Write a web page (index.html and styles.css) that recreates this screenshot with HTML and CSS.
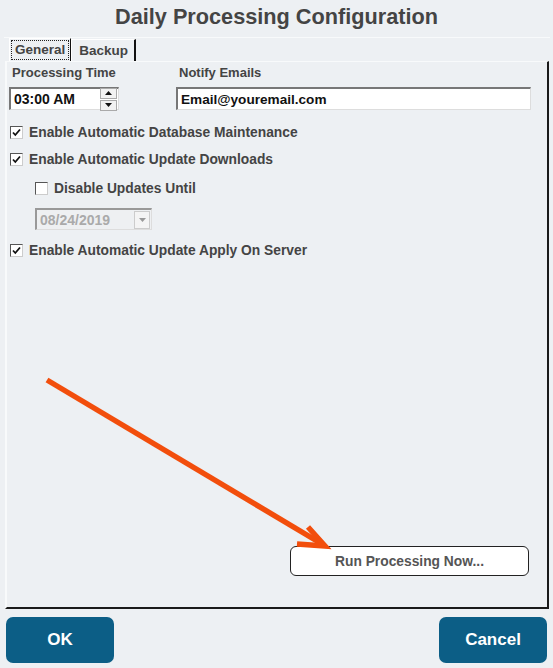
FILE: index.html
```html
<!DOCTYPE html>
<html lang="en">

<head>
    <meta charset="UTF-8">
    <title>Daily Processing Configuration</title>
    <meta name="viewport" content="width=device-width, initial-scale=1.0">
    <link rel="stylesheet" href="styles.css">
</head>

<body>
    <div class="dialog">
        <h1 class="title">Daily Processing Configuration</h1>

        <div class="tab-strip">
            <div class="tab tab-active"><span class="focus">General</span></div>
            <div class="tab">Backup</div>
        </div>

        <div class="panel">
            <div class="field-grid">
                <label class="field-label">Processing Time</label>
                <label class="field-label">Notify Emails</label>
                <div class="textbox time-box">
                    <span>03:00 AM</span>
                    <div class="spinner">
                        <div class="spin-btn"><svg width="7" height="4" viewBox="0 0 7 4"><path d="M0 4 L3.5 0 L7 4 Z" fill="#111"/></svg></div>
                        <div class="spin-btn"><svg width="7" height="4" viewBox="0 0 7 4"><path d="M0 0 L3.5 4 L7 0 Z" fill="#111"/></svg></div>
                    </div>
                </div>
                <div class="textbox email-box">Email@youremail.com</div>
            </div>

            <div class="check-row first">
                <span class="checkbox checked"><svg width="9" height="9" viewBox="0 0 9 9"><path d="M1 4.5 L3.3 7 L8 1.5" fill="none" stroke="#111" stroke-width="1.8"/></svg></span>
                Enable Automatic Database Maintenance
            </div>
            <div class="check-row">
                <span class="checkbox checked"><svg width="9" height="9" viewBox="0 0 9 9"><path d="M1 4.5 L3.3 7 L8 1.5" fill="none" stroke="#111" stroke-width="1.8"/></svg></span>
                Enable Automatic Update Downloads
            </div>
            <div class="check-row indent">
                <span class="checkbox"></span>
                Disable Updates Until
            </div>
            <div class="date-box">
                <span>08/24/2019</span>
                <div class="drop-btn"><svg width="7" height="4" viewBox="0 0 7 4"><path d="M0 0 L3.5 4 L7 0 Z" fill="#999"/></svg></div>
            </div>
            <div class="check-row after-date">
                <span class="checkbox checked"><svg width="9" height="9" viewBox="0 0 9 9"><path d="M1 4.5 L3.3 7 L8 1.5" fill="none" stroke="#111" stroke-width="1.8"/></svg></span>
                Enable Automatic Update Apply On Server
            </div>

            <div class="run-row">
                <button class="run-btn">Run Processing Now...</button>
            </div>
        </div>

        <div class="footer">
            <button class="big-btn">OK</button>
            <button class="big-btn">Cancel</button>
        </div>

        <!-- annotation arrow pointing at the run button -->
        <svg class="arrow" width="553" height="668" viewBox="0 0 553 668">
            <path d="M47 380 L322 544" stroke="#f24e0c" stroke-width="5.5" fill="none"/>
            <path d="M308 527 L325 546 L297 544" stroke="#f24e0c" stroke-width="5.5" fill="none"/>
        </svg>
    </div>
</body>

</html>
```

FILE: styles.css
```css
body {
    margin: 0;
    padding: 0;
    background-color: #edf0f3;
    font-family: 'Liberation Sans', Arial, sans-serif;
    color: #444;
}

.dialog {
    position: relative;
    width: 553px;
    height: 668px;
    display: flex;
    flex-direction: column;
}

.title {
    margin: 0;
    height: 37px;
    line-height: 34px;
    font-size: 21.7px;
    font-weight: bold;
    text-align: center;
    color: #444;
}

.tab-strip {
    display: flex;
    align-items: flex-end;
    height: 24px;
    margin: 0 3px 0 4px;
    padding-left: 5px;
    border-top: 1px solid #f8fafb;
    box-sizing: border-box;
}

.tab {
    height: 22px;
    padding: 0 6px 0 7px;
    font-size: 13.5px;
    font-weight: bold;
    line-height: 22px;
    color: #444;
    border-left: 1px solid #fff;
    border-top: 1px solid #fff;
    border-right: 2px solid #111;
    box-sizing: border-box;
}

.tab-active {
    height: 23px;
    padding: 1px 1px;
    line-height: 18px;
    border-right-width: 1px;
}

.focus {
    display: block;
    height: 20px;
    padding: 0 3px;
    border: 1px dotted #222;
    box-sizing: border-box;
}

.panel {
    height: 548px;
    margin: 0 4px 0 5px;
    border-top: 1px solid #f8fafb;
    border-left: 2px solid #f8fafb;
    border-right: 2px solid #1a1a1a;
    border-bottom: 2px solid #1a1a1a;
    box-sizing: border-box;
    display: flex;
    flex-direction: column;
}

.field-grid {
    display: grid;
    grid-template-columns: 167px 355px;
    row-gap: 6px;
    padding: 2px 0 0 2px;
}

.field-label {
    font-size: 13px;
    font-weight: bold;
    padding-left: 3px;
    line-height: 17px;
}

.textbox {
    height: 23px;
    background: #fff;
    border-top: 2px solid #777;
    border-left: 2px solid #777;
    border-right: 1px solid #ddd;
    border-bottom: 1px solid #ddd;
    box-sizing: border-box;
    font-size: 14px;
    font-weight: bold;
    color: #111;
    display: flex;
    align-items: center;
    padding-left: 3px;
}

.time-box {
    width: 110px;
    justify-content: space-between;
    padding-right: 1px;
}

.spinner {
    display: flex;
    flex-direction: column;
    gap: 1px;
}

.spin-btn {
    width: 15px;
    height: 9px;
    background: #f2f2f2;
    border: 1px solid #aaa;
    display: flex;
    align-items: center;
    justify-content: center;
}

.email-box {
    width: 355px;
    font-size: 13.6px;
}

.check-row {
    display: flex;
    align-items: center;
    gap: 6px;
    margin: 11px 0 0 3px;
    height: 16px;
    font-size: 13.8px;
    font-weight: bold;
    color: #444;
}

.check-row.first {
    margin-top: 14px;
}

.check-row.indent {
    margin-top: 13px;
    margin-left: 28px;
}

.check-row.after-date {
    margin-top: 12px;
}

.checkbox {
    width: 11px;
    height: 11px;
    background: #fff;
    border-top: 1px solid #555;
    border-left: 1px solid #555;
    border-right: 1px solid #ccc;
    border-bottom: 1px solid #ccc;
    display: flex;
    align-items: center;
    justify-content: center;
}

.date-box {
    width: 117px;
    height: 22px;
    margin: 12px 0 0 28px;
    background: #eef0f2;
    border-top: 2px solid #999;
    border-left: 2px solid #999;
    border-right: 1px solid #ddd;
    border-bottom: 1px solid #ddd;
    box-sizing: border-box;
    display: flex;
    align-items: center;
    justify-content: space-between;
    padding: 0 1px 0 3px;
    font-size: 14px;
    font-weight: bold;
    color: #aaa;
}

.drop-btn {
    width: 14px;
    height: 16px;
    background: #f4f4f4;
    border: 1px solid #ccc;
    display: flex;
    align-items: center;
    justify-content: center;
}

.run-row {
    margin-top: auto;
    display: flex;
    justify-content: flex-end;
    padding: 0 18px 31px 0;
}

.run-btn {
    width: 239px;
    height: 30px;
    background: #fff;
    border: 1px solid #222;
    border-radius: 6px;
    font-family: 'Liberation Sans', Arial, sans-serif;
    font-size: 13.8px;
    font-weight: bold;
    color: #555;
}

.footer {
    display: flex;
    justify-content: space-between;
    padding: 8px 6px 0 6px;
}

.big-btn {
    width: 108px;
    height: 46px;
    background: #0c5e86;
    border: none;
    border-radius: 7px;
    font-family: 'Liberation Sans', Arial, sans-serif;
    font-size: 17px;
    font-weight: bold;
    color: #fff;
}

.arrow {
    position: absolute;
    left: 0;
    top: 0;
    pointer-events: none;
}
```
